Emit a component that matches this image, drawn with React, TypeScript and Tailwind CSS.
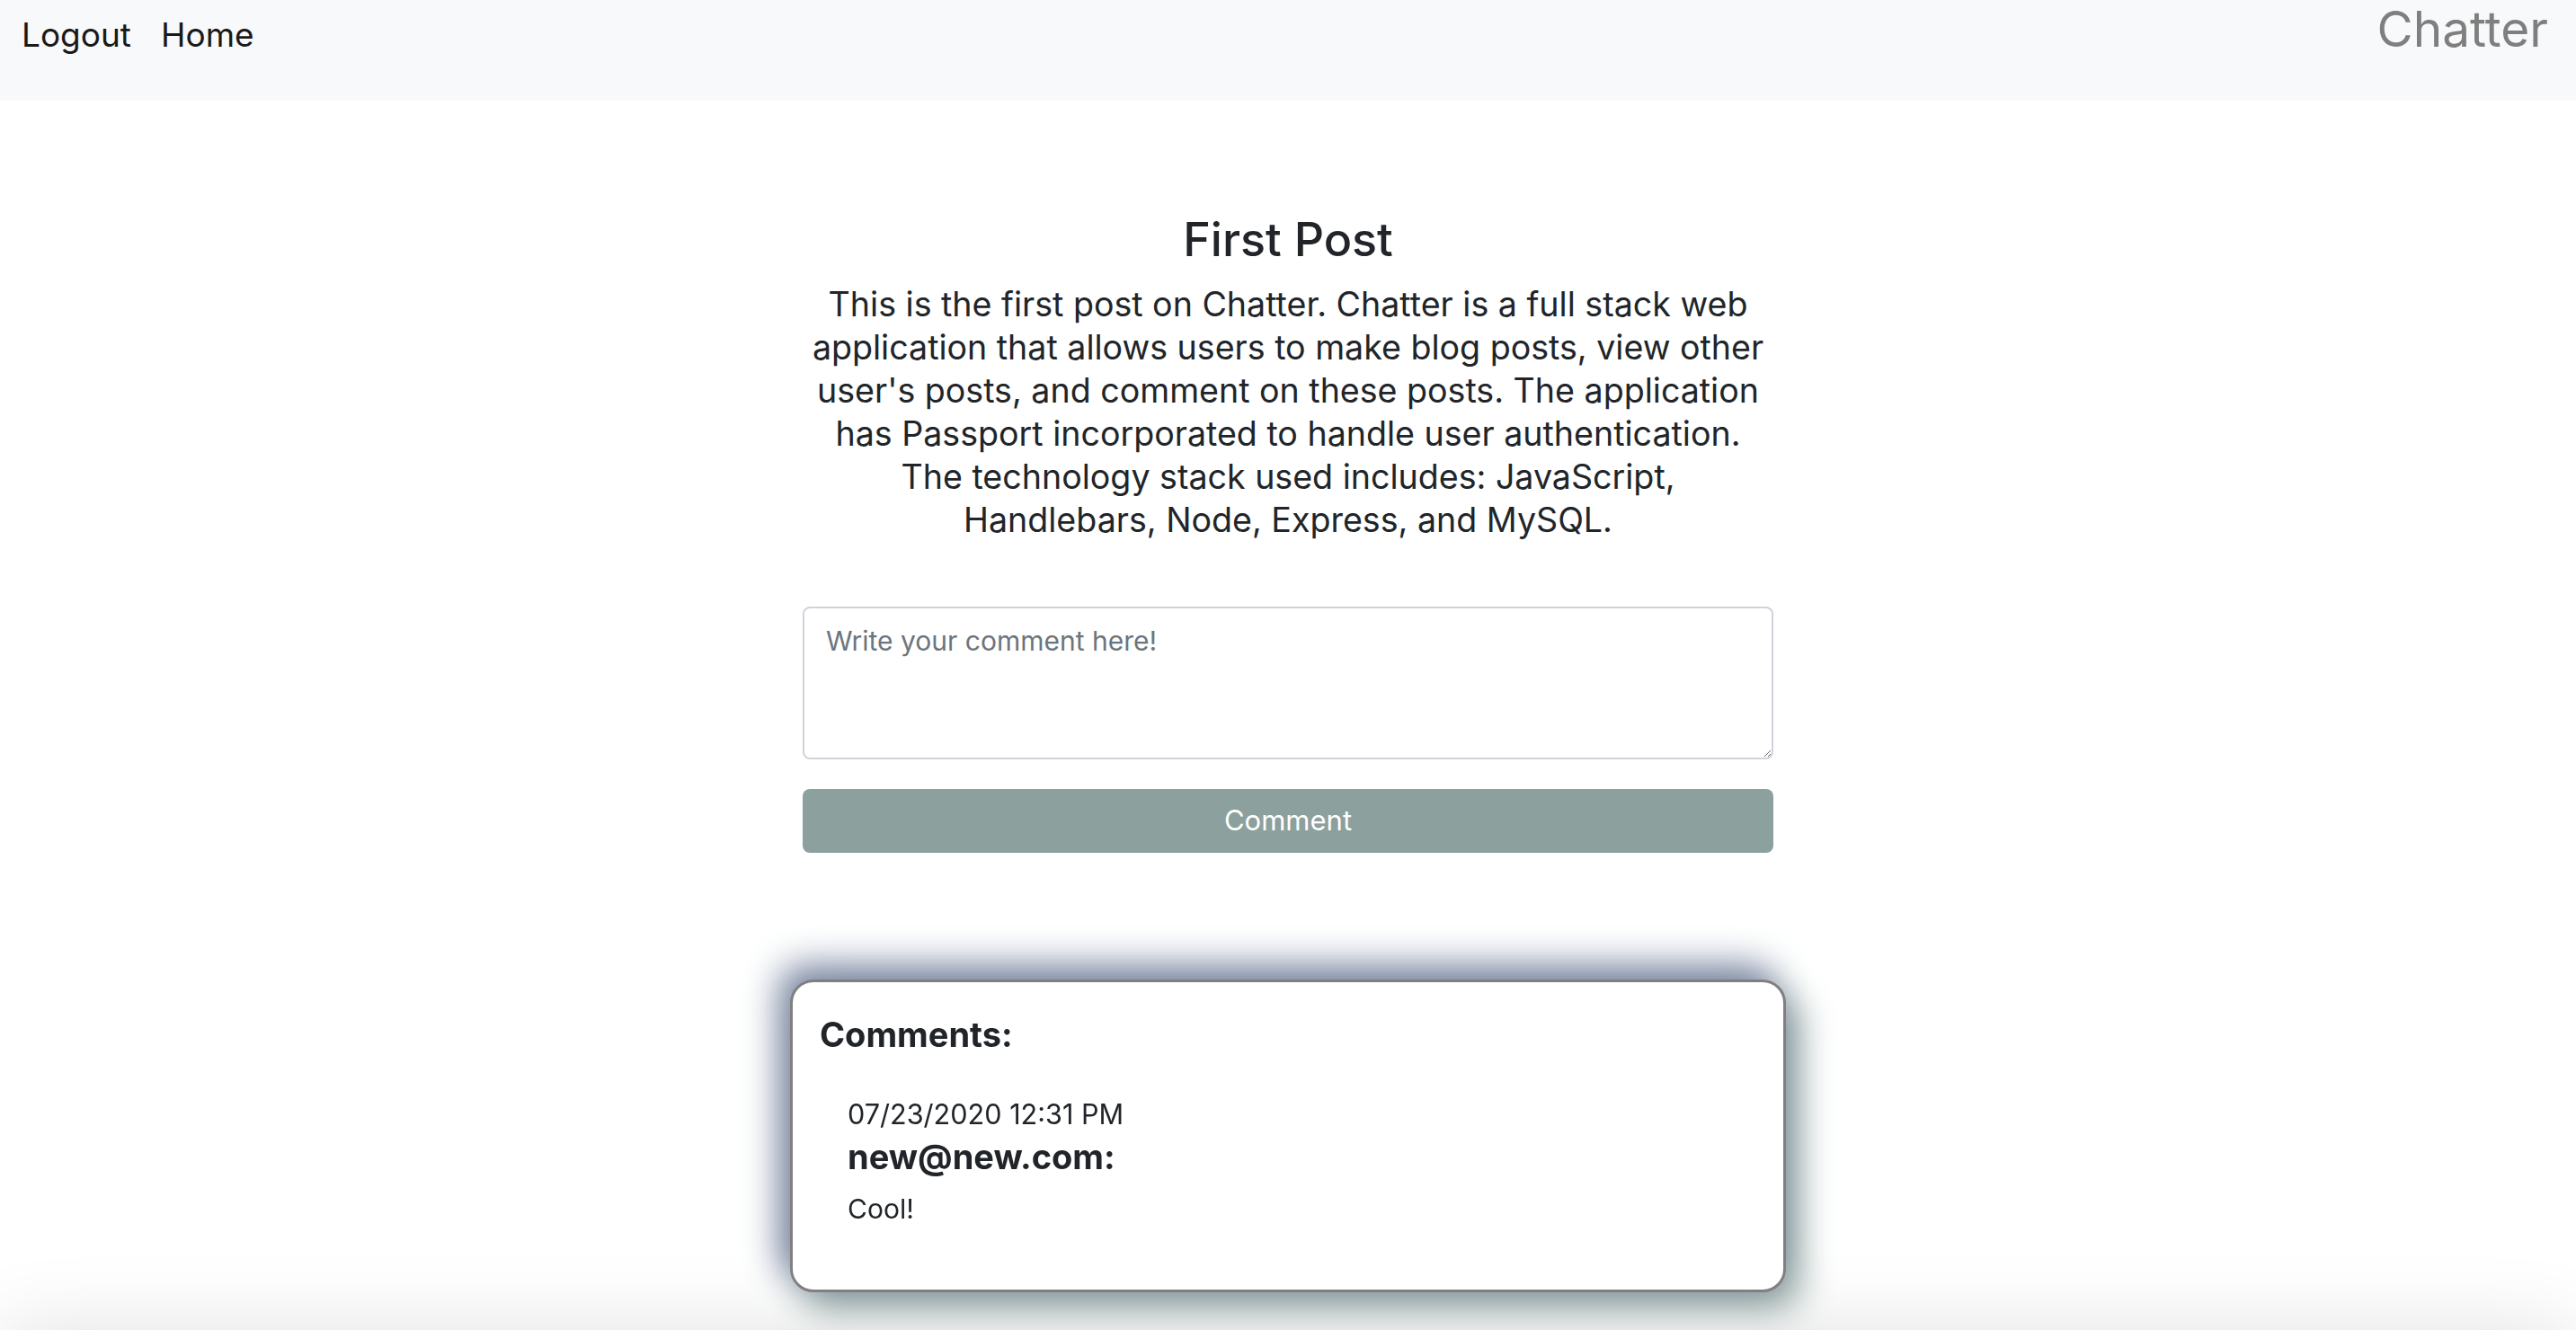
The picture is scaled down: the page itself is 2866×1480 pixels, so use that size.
import { useState } from "react";

const post = {
  title: "First Post",
  body: "This is the first post on Chatter. Chatter is a full stack web application that allows users to make blog posts, view other user's posts, and comment on these posts. The application has Passport incorporated to handle user authentication. The technology stack used includes: JavaScript, Handlebars, Node, Express, and MySQL.",
};

const comments = [
  { date: "07/23/2020 12:31 PM", author: "new@new.com", text: "Cool!" },
];

export default function App() {
  const [draft, setDraft] = useState("");

  return (
    <div className="relative min-h-screen bg-white font-['Inter','Liberation_Sans',sans-serif] text-[#212529]">
      <nav className="flex h-[112px] items-start justify-between bg-[#f8f9fa]">
        <div className="flex gap-[33px] pl-[24px] pt-[14px] text-[37px] leading-[50px] text-[#1a1a1a]">
          <a href="#">Logout</a>
          <a href="#">Home</a>
        </div>
        <a href="#" className="pr-[31px] text-[55px] leading-[64px] text-[#7f7f7f]">
          Chatter
        </a>
      </nav>

      <main className="mx-auto w-[1080px] text-center">
        <h1 className="mt-[123px] text-[52px] font-medium leading-[64px]">{post.title}</h1>
        <p className="mx-auto mt-[16px] w-[1064px] text-[37.6px] leading-[48px]">{post.body}</p>

        <form className="mt-[72px]" onSubmit={(e) => e.preventDefault()}>
          <textarea
            value={draft}
            onChange={(e) => setDraft(e.target.value)}
            placeholder="Write your comment here!"
            className="block h-[170px] w-full rounded-[8px] border-2 border-[#ced4da] px-[24px] py-[14px] text-[30px] leading-[45px] placeholder:text-[#6c757d] focus:outline-none"
          />
          <button
            type="submit"
            className="mt-[33px] block h-[71px] w-full rounded-[8px] bg-[#8ca09e] text-[31px] text-white"
          >
            Comment
          </button>
        </form>
      </main>

      <section className="relative z-10 mx-auto mt-[141px] h-[348px] w-[1108px] rounded-[26px] border-[3px] border-[#808080] bg-white px-[30px] pt-[34px] shadow-[-12px_-16px_40px_#76839e,14px_18px_40px_#8a9d9b]">
        <h2 className="text-[38px] font-bold leading-[48px]">Comments:</h2>
        {comments.map((c) => (
          <div key={c.date} className="mt-[45px] pl-[31px]">
            <p className="text-[30.6px] leading-[40px]">{c.date}</p>
            <h3 className="mt-[4px] text-[38px] font-bold leading-[46px]">{c.author}:</h3>
            <p className="mt-[15px] text-[30px] leading-[40px]">{c.text}</p>
          </div>
        ))}
      </section>

      <div className="fixed left-0 right-0 top-full h-[100px] shadow-[0_0_90px_rgba(0,0,0,0.12)]" />
    </div>
  );
}
